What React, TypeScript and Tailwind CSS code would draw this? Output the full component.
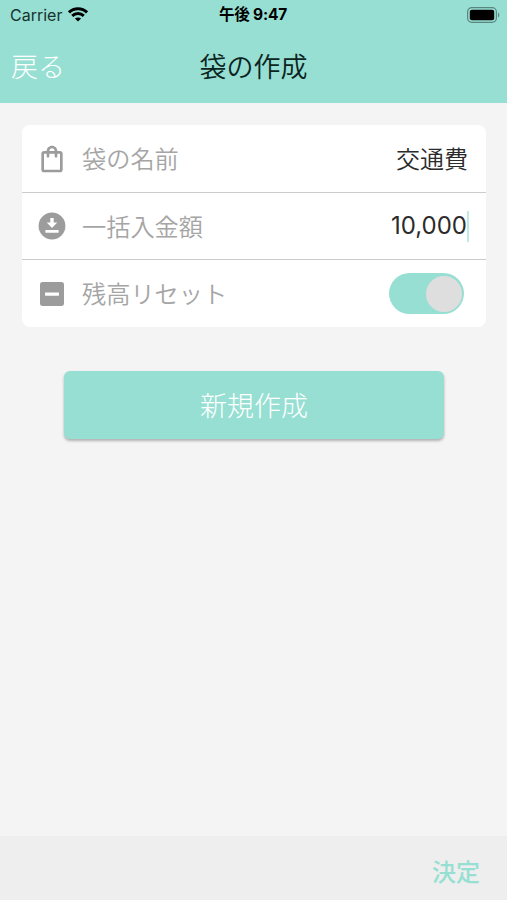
import type { ReactNode } from 'react';
import { MdOutlineShoppingBag } from 'react-icons/md';

interface FormRowProps {
  icon: ReactNode;
  label: string;
  children: ReactNode;
}

function FormRow({ icon, label, children }: FormRowProps) {
  return (
    <div className="flex h-[67px] items-center pl-3.5 pr-[18px] first:h-[68px]">
      <span className="text-[32px] text-[#9c9c9c]">{icon}</span>
      <span className="ml-[14px] text-[24.2px] font-[350] text-[#a5a5a5]">{label}</span>
      <div className="ml-auto flex items-center text-2xl text-[#2b2b2b]">{children}</div>
    </div>
  );
}

function DepositIcon() {
  return (
    <svg width="32" height="32" viewBox="0 0 32 32" fill="currentColor">
      <circle cx="16" cy="16" r="13.4" />
      <path d="M14.3 8h3.4v4.6h3.6L16 18.1l-5.3-5.5h3.6Z" fill="#fff" />
      <rect x="9.4" y="20" width="13.2" height="2.8" rx=".5" fill="#fff" />
    </svg>
  );
}

function ResetIcon() {
  return (
    <svg width="32" height="32" viewBox="0 0 32 32" fill="currentColor">
      <rect x="4" y="4" width="24" height="24" rx="2.7" />
      <rect x="9" y="14.5" width="14" height="3.2" rx=".4" fill="#fff" />
    </svg>
  );
}

function WifiIcon() {
  return (
    <svg width="20" height="15" viewBox="0 0 20 15" fill="none" stroke="#000" strokeWidth="3">
      <path d="M1 5.4C6 .5 14 .5 19 5.4" />
      <path d="M4.2 8.9c3.3-3.1 8.3-3.1 11.6 0" />
      <path d="M10 14.5 6.9 11.6c1.8-1.6 4.4-1.6 6.2 0Z" fill="#000" stroke="none" />
    </svg>
  );
}

function BatteryIcon() {
  return (
    <svg width="33" height="16" viewBox="0 0 33 16">
      <rect x=".6" y=".6" width="28.8" height="14.8" rx="4.2" fill="none" stroke="#000" strokeOpacity=".4" strokeWidth="1.2" />
      <rect x="2.8" y="2.8" width="24.4" height="10.4" rx="2" />
      <path d="M31 5.5c1.8.7 1.8 4.3 0 5Z" fillOpacity=".4" />
    </svg>
  );
}

function StatusBar() {
  return (
    <div className="grid h-[29px] grid-cols-3 items-center pl-2.5 pr-[7px] font-['Inter','Noto_Sans_CJK_JP',sans-serif] text-black">
      <div className="flex items-center gap-1.5">
        <span className="text-base text-[#16332e]">Carrier</span>
        <WifiIcon />
      </div>
      <span className="-ml-1 text-center text-[15.5px] font-bold tracking-[-0.2px]">午後 9:47</span>
      <div className="flex justify-end">
        <BatteryIcon />
      </div>
    </div>
  );
}

export default function App() {
  return (
    <div className="flex h-[900px] w-[507px] flex-col bg-[#f4f4f4] font-['Noto_Sans_CJK_JP',sans-serif]">
      <header className="h-[103px] bg-[#97dfd3]">
        <StatusBar />
        <div className="grid h-[74px] grid-cols-3 items-center px-[11px]">
          <button className="text-left text-[27px] font-light text-white">戻る</button>
          <h1 className="text-center text-[27px] font-[350] text-[#0c2420]">袋の作成</h1>
        </div>
      </header>

      <main className="flex-1 pl-[22px] pr-[21px] pt-[22px]">
        <div className="divide-y divide-[#cccccc] rounded-lg bg-white">
          <FormRow icon={<MdOutlineShoppingBag />} label="袋の名前">
            <span className="-mt-0.5 font-[350]">交通費</span>
          </FormRow>
          <FormRow icon={<DepositIcon />} label="一括入金額">
            <span className="font-['Inter',sans-serif]">10,000</span>
            <span className="-mr-px h-[31px] w-0.5 bg-[#bdebe2]" />
          </FormRow>
          <FormRow icon={<ResetIcon />} label="残高リセット">
            <button className="mr-1 flex h-[41px] w-[75px] items-center justify-end rounded-full bg-[#97dfd3] pr-0.5">
              <span className="size-9 rounded-full bg-[#dedede]" />
            </button>
          </FormRow>
        </div>

        <button className="mx-auto mt-11 block h-[68px] w-[380px] rounded-md bg-[#97dfd3] text-[27px] font-light text-white shadow-[0_2px_3px_rgba(0,0,0,0.28)]">
          新規作成
        </button>
      </main>

      <footer className="flex h-16 items-center justify-end bg-[#eeeeee] pr-[27px]">
        <button className="mt-1.5 text-2xl font-medium text-[#97dfd3]">決定</button>
      </footer>
    </div>
  );
}
